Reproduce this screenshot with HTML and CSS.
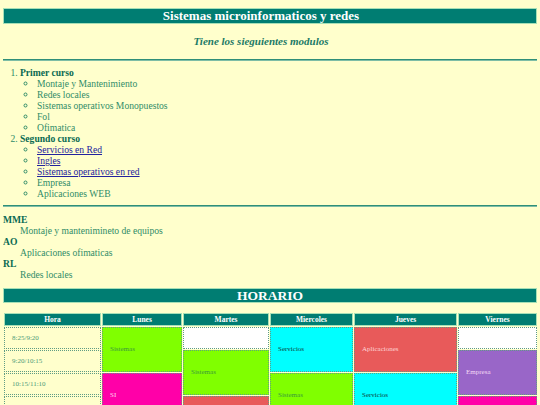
FILE: index.html
```html
<!DOCTYPE html>
<html lang="es">
<head>
<meta charset="utf-8">
<title>Sistemas microinformaticos y redes</title>
<link rel="stylesheet" href="styles.css">
</head>
<body>
<h1 class="bar bar-title">Sistemas microinformaticos y redes</h1>
<h2 class="subtitle">Tiene los sieguientes modulos</h2>
<hr class="rule">
<ol class="courses">
  <li><b>Primer curso</b>
    <ul class="modules">
      <li>Montaje y Mantenimiento</li>
      <li>Redes locales</li>
      <li>Sistemas operativos Monopuestos</li>
      <li>Fol</li>
      <li>Ofimatica</li>
    </ul>
  </li>
  <li><b>Segundo curso</b>
    <ul class="modules">
      <li><a href="#">Servicios en Red</a></li>
      <li><a href="#">Ingles</a></li>
      <li><a href="#">Sistemas operativos en red</a></li>
      <li>Empresa</li>
      <li>Aplicaciones WEB</li>
    </ul>
  </li>
</ol>
<hr class="rule">
<dl class="glossary">
  <dt>MME</dt>
  <dd>Montaje y mantenimineto de equipos</dd>
  <dt>AO</dt>
  <dd>Aplicaciones ofimaticas</dd>
  <dt>RL</dt>
  <dd>Redes locales</dd>
</dl>
<h1 class="bar bar-big">HORARIO</h1>
<table class="schedule">
  <colgroup>
    <col class="c-hora"><col class="c-lun"><col class="c-mar"><col class="c-mie"><col class="c-jue"><col class="c-vie">
  </colgroup>
  <tr class="head">
    <th>Hora</th><th>Lunes</th><th>Martes</th><th>Miercoles</th><th>Jueves</th><th>Viernes</th>
  </tr>
  <tr>
    <td class="hora">8:25/9:20</td>
    <td rowspan="2" class="green">Sistemas</td>
    <td class="blank"></td>
    <td rowspan="2" class="cyan">Servicios</td>
    <td rowspan="2" class="red">Aplicaciones</td>
    <td class="blank"></td>
  </tr>
  <tr>
    <td class="hora">9:20/10:15</td>
    <td rowspan="2" class="green">Sistemas</td>
    <td rowspan="2" class="purple">Empresa</td>
  </tr>
  <tr>
    <td class="hora">10:15/11:10</td>
    <td rowspan="2" class="pink">SI</td>
    <td rowspan="2" class="green">Sistemas</td>
    <td rowspan="2" class="cyan">Servicios</td>
  </tr>
  <tr>
    <td class="hora">11:10/12:05</td>
    <td rowspan="2" class="red">Aplicaciones</td>
    <td rowspan="2" class="pink">SI</td>
  </tr>
  <tr>
    <td class="hora">12:05/13:00</td>
    <td rowspan="2" class="purple">Empresa</td>
    <td rowspan="2" class="red">Aplicaciones</td>
    <td rowspan="2" class="green">Sistemas</td>
  </tr>
  <tr>
    <td class="hora">13:00/13:55</td>
    <td rowspan="2" class="cyan">Servicios</td>
    <td rowspan="2" class="green">Sistemas</td>
  </tr>
  <tr>
    <td class="hora">13:55/14:50</td>
    <td class="blank"></td>
    <td class="blank"></td>
    <td class="blank"></td>
  </tr>
</table>
</body>
</html>
```

FILE: styles.css
```css
html {
  background: #ffffcc;
}

body {
  margin: 0 3px 20px;
  font-family: "Liberation Serif", "Times New Roman", serif;
  font-size: 9.6px;
  line-height: 11px;
  color: #2f8c68;
}

/* teal heading bars */
.bar {
  margin: 8px 0 0;
  background: #007d72;
  color: #ffffff;
  border: 1px solid #a6dfb6;
  text-align: center;
  font-size: 13px;
  line-height: 14px;
  font-weight: bold;
}

/* the page title and subtitle sit a little left of centre */
.bar-title {
  padding-right: 18px;
}

.bar-big {
  margin-top: 8px;
  font-size: 13.5px;
  line-height: 13px;
  padding-right: 0;
}

.subtitle {
  margin: 11px 0 11px;
  padding-right: 18px;
  text-align: center;
  font-size: 11px;
  line-height: 13px;
  font-style: italic;
  font-weight: bold;
  color: #1b7a66;
}

.rule {
  margin: 0;
  height: 0;
  border: 0;
  border-top: 1px solid #2f8f78;
  border-bottom: 1px solid #7ebda6;
}

/* module lists */
.courses {
  margin: 6px 0 6px;
  padding-left: 17px;
}

.courses b {
  color: #0a6a52;
}

.modules {
  margin: 0;
  padding-left: 17px;
  list-style: circle;
}

.modules a {
  color: #22229e;
}

.glossary {
  margin: 7px 0 0;
}

.glossary dt {
  font-weight: bold;
  color: #0a6a52;
}

.glossary dd {
  margin-left: 17px;
}

/* timetable */
.schedule {
  margin-top: 9px;
  width: 535px;
  table-layout: fixed;
  border-collapse: separate;
  border-spacing: 1px;
  font-size: 7px;
  line-height: 9px;
}

.c-hora { width: 97px; }
.c-lun { width: 80px; }
.c-mar { width: 86px; }
.c-mie { width: 83px; }
.c-jue { width: 103px; }
.c-vie { width: 79px; }

.schedule th {
  height: 13px;
  padding: 0;
  background: #007d72;
  color: #ffffff;
  border: 1px solid #a6dfb6;
  font-size: 7.5px;
  font-weight: bold;
  box-sizing: border-box;
}

.schedule tr {
  height: 22px;
}

.schedule tr.head {
  height: 13px;
}

.schedule td {
  padding: 0 7px;
  border: 1px dotted #5f9c84;
  vertical-align: middle;
  box-sizing: border-box;
}

.hora {
  color: #4c9a78;
}

.blank { background: #ffffff; }
.green { background: #80ff00; color: #3c9a3c; }
.cyan { background: #00ffff; color: #10403c; }
.red { background: #e85a5a; color: #ffd6d6; }
.purple { background: #9966c8; color: #f6dcf6; }
.pink { background: #ff00a8; color: #ffd8f0; }
```
